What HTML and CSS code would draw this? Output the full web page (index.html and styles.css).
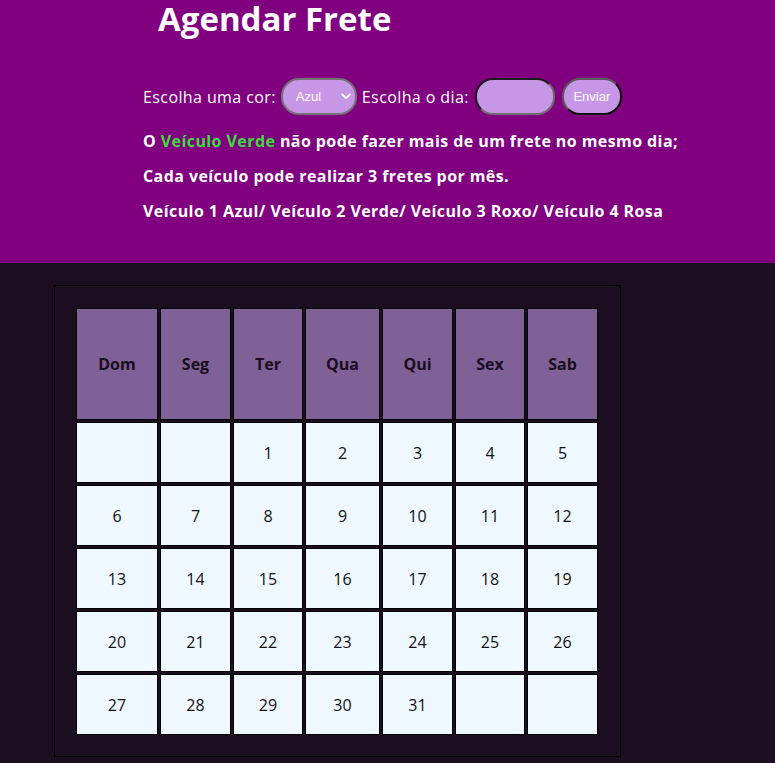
FILE: index.html
```html
<!DOCTYPE html>
<html lang="pt-BR">
<head>
<meta charset="utf-8">
<title>Agendar Frete</title>
<link rel="stylesheet" href="styles.css">
</head>
<body>
<header class="header">
  <h1 class="title">Agendar Frete</h1>
  <form class="form-row">
    <label class="label" for="cor">Escolha uma cor:</label>
    <span class="select-wrap">
      <select class="select" id="cor">
        <option>Azul</option>
        <option>Verde</option>
        <option>Roxo</option>
        <option>Rosa</option>
      </select>
      <svg class="chevron" width="10" height="7" viewBox="0 0 10 7" aria-hidden="true"><path d="M1.2 1.5 L5 5.2 L8.8 1.5" fill="none" stroke="#fff" stroke-width="1.8" stroke-linecap="round" stroke-linejoin="round"/></svg>
    </span>
    <label class="label label-dia" for="dia">Escolha o dia:</label>
    <input class="input" id="dia" type="text">
    <button class="button" type="button">Enviar</button>
  </form>
  <div class="rules">
    <p>O <span class="green">Veículo Verde</span> não pode fazer mais de um frete no mesmo dia;</p>
    <p>Cada veículo pode realizar 3 fretes por mês.</p>
    <p>Veículo 1 Azul/ Veículo 2 Verde/ Veículo 3 Roxo/ Veículo 4 Rosa</p>
  </div>
</header>
<main class="main">
  <div class="calendar">
    <div class="grid">
      <div class="cell head">Dom</div>
      <div class="cell head">Seg</div>
      <div class="cell head">Ter</div>
      <div class="cell head">Qua</div>
      <div class="cell head">Qui</div>
      <div class="cell head">Sex</div>
      <div class="cell head">Sab</div>
      <div class="cell"></div>
      <div class="cell"></div>
      <div class="cell">1</div>
      <div class="cell">2</div>
      <div class="cell">3</div>
      <div class="cell">4</div>
      <div class="cell">5</div>
      <div class="cell">6</div>
      <div class="cell">7</div>
      <div class="cell">8</div>
      <div class="cell">9</div>
      <div class="cell">10</div>
      <div class="cell">11</div>
      <div class="cell">12</div>
      <div class="cell">13</div>
      <div class="cell">14</div>
      <div class="cell">15</div>
      <div class="cell">16</div>
      <div class="cell">17</div>
      <div class="cell">18</div>
      <div class="cell">19</div>
      <div class="cell">20</div>
      <div class="cell">21</div>
      <div class="cell">22</div>
      <div class="cell">23</div>
      <div class="cell">24</div>
      <div class="cell">25</div>
      <div class="cell">26</div>
      <div class="cell">27</div>
      <div class="cell">28</div>
      <div class="cell">29</div>
      <div class="cell">30</div>
      <div class="cell">31</div>
      <div class="cell"></div>
      <div class="cell"></div>
    </div>
  </div>
</main>
</body>
</html>
```

FILE: styles.css
```css
html, body {
  margin: 0;
  padding: 0;
}

body {
  background: #1a0e20;
  font-family: "Open Sans", sans-serif;
  color: #000;
}

.header {
  background: #800080;
  height: 263px;
  box-sizing: border-box;
  padding: 1px 0 0 143px;
  color: #fff;
}

.title {
  margin: 0 0 0 15px;
  font-size: 33px;
  line-height: 36px;
  font-weight: 700;
}

.form-row {
  display: flex;
  align-items: center;
  height: 37px;
  margin-top: 41px;
}

.label {
  font-size: 16px;
  letter-spacing: 0.4px;
  color: #fff;
}

.select-wrap {
  position: relative;
  display: flex;
  margin-left: 5px;
}

.select {
  appearance: none;
  -webkit-appearance: none;
  width: 76px;
  height: 37px;
  box-sizing: border-box;
  border: 2px solid #737373;
  border-radius: 18px;
  background: #c896e6;
  color: #fff;
  font-family: "Liberation Sans", Arial, sans-serif;
  font-size: 13px;
  padding: 0 6px 0 13px;
  margin: 0;
}

.chevron {
  position: absolute;
  right: 6px;
  top: 15px;
  pointer-events: none;
}

.label-dia {
  margin-left: 5px;
}

.input {
  margin: 0 0 0 6px;
  width: 80px;
  height: 37px;
  box-sizing: border-box;
  border: 2px solid;
  border-color: #1c1c1c #6e6e6e #6e6e6e #1c1c1c;
  border-radius: 18px;
  background: #c896e6;
  padding: 0 10px;
}

.button {
  margin-left: 7px;
  width: 60px;
  height: 37px;
  box-sizing: border-box;
  border: 2px solid;
  border-color: #5a5a5a #111 #111 #5a5a5a;
  border-radius: 18px;
  background: #c896e6;
  color: #fff;
  font-family: "Liberation Sans", Arial, sans-serif;
  font-size: 13px;
  padding: 0;
}

.rules {
  margin-top: 9px;
}

.rules p {
  margin: 0;
  font-size: 16px;
  font-weight: 700;
  letter-spacing: 0.42px;
  line-height: 35px;
}

.green {
  color: #3ddc3d;
}

.main {
  padding: 22px 0 0 54px;
}

.calendar {
  width: 567px;
  box-sizing: border-box;
  border: 1px solid #000;
  padding: 22px 22px 21px 21px;
}

.grid {
  display: grid;
  grid-template-columns: 82px 71px 70px 75px 71px 70px 71px;
  grid-template-rows: 112px repeat(5, 61px);
  gap: 2px;
}

.cell {
  border: 1px solid #000;
  background: #f0f8ff;
  display: flex;
  align-items: center;
  justify-content: center;
  font-size: 16px;
  color: #111;
}

.head {
  background: #7f6198;
  font-weight: 700;
  color: #1a0e20;
}
```
